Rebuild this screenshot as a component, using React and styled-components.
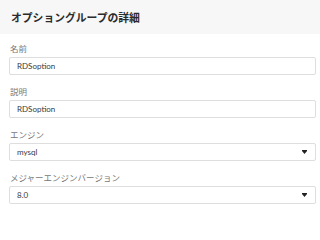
import React from 'react';
import styled, { createGlobalStyle } from 'styled-components';

const GlobalStyle = createGlobalStyle`
  html, body {
    margin: 0;
    padding: 0;
    background: #fff;
  }
  body {
    font-family: Lato, 'Noto Sans CJK JP', sans-serif;
    color: #333;
  }
`;

const Panel = styled.section`
  width: 320px;
  height: 210px;
  overflow: hidden;
`;

const Header = styled.header`
  height: 34px;
  display: flex;
  align-items: center;
  padding-left: 11px;
  background: #f7f7f7;
  font-size: 10.8px;
  font-weight: 700;
  color: #2b2b2b;
`;

const Form = styled.div`
  display: flex;
  flex-direction: column;
  gap: 11px;
  padding: 9px 4px 0 9px;
`;

const Field = styled.div`
  display: flex;
  flex-direction: column;
  gap: 1px;
`;

const Label = styled.label`
  font-size: 8.5px;
  line-height: 13px;
  color: #777;
  padding-left: 1px;
`;

const Box = styled.div`
  height: 18px;
  box-sizing: border-box;
  display: flex;
  align-items: center;
  padding: 0 8px 0 7px;
  border: 1px solid #dedede;
  border-radius: 2px;
  background: #fff;
  font-size: 8px;
  color: #3a3a3a;
`;

const Arrow = styled.svg`
  margin-left: auto;
  width: 5px;
  height: 4px;
`;

const Caret = () => (
  <Arrow viewBox="0 0 5 4">
    <rect x="0" y="0" width="5" height="1" fill="#222" />
    <polygon points="0,1 5,1 2.5,4" fill="#222" />
  </Arrow>
);

const fields = [
  { label: '名前', value: 'RDSoption' },
  { label: '説明', value: 'RDSoption' },
  { label: 'エンジン', value: 'mysql', select: true },
  { label: 'メジャーエンジンバージョン', value: '8.0', select: true },
];

const App = () => (
  <Panel>
    <GlobalStyle />
    <Header>オプショングループの詳細</Header>
    <Form>
      {fields.map((f) => (
        <Field key={f.label}>
          <Label>{f.label}</Label>
          <Box>
            {f.value}
            {f.select && <Caret />}
          </Box>
        </Field>
      ))}
    </Form>
  </Panel>
);

export default App;
